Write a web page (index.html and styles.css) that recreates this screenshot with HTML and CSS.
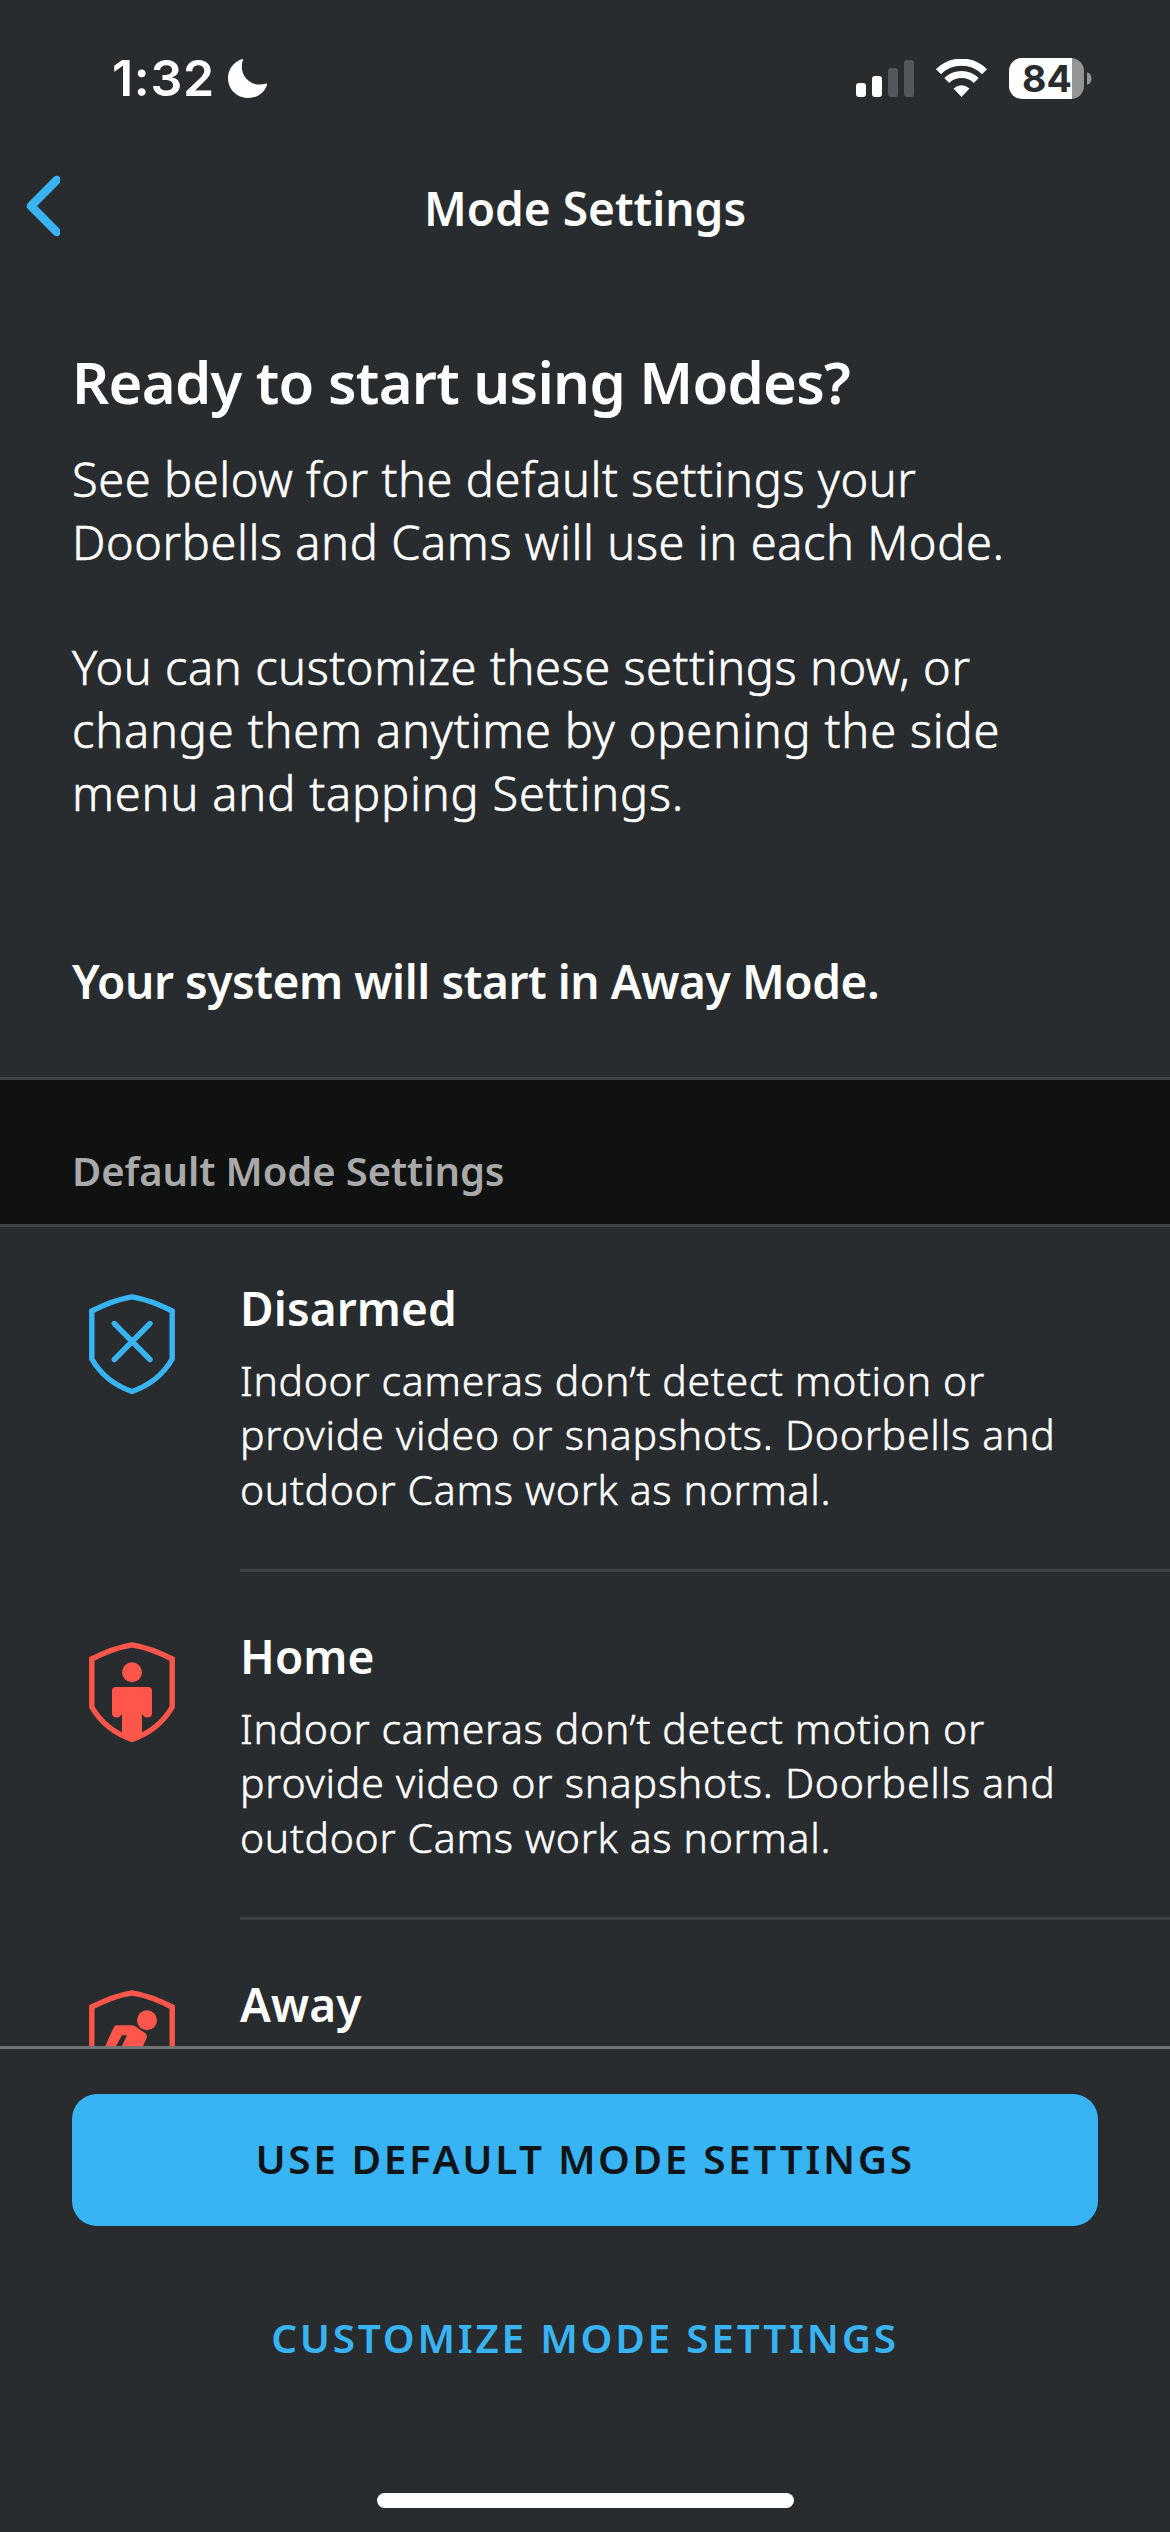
FILE: index.html
```html
<!DOCTYPE html>
<html lang="en">
<head>
<meta charset="utf-8">
<title>Mode Settings</title>
<link rel="stylesheet" href="styles.css">
</head>
<body>
<div class="screen">
  <div class="status">
    <span class="time">1:32</span>
    <svg class="moon" width="39" height="39" viewBox="0 0 39 39"><path d="M15.2 0.3C13.2 5.5 12.8 13.500 18.200 19.500C23.500 25.400 31 26.800 38.200 24.600Q39.300 24.500 39 25.800C36.700 33.700 29 39 20.500 39C9 39 0 30.500 0 19C0 10.500 5.500 3 13.500 0.200Q15.500 -0.400 15.200 0.300Z" fill="#fff"/></svg>
    <svg class="signal" width="58" height="37" viewBox="0 0 58 37"><rect y="23" width="10" height="14" rx="3" fill="#fff"/><rect x="16" y="16" width="10" height="21" rx="3" fill="#fff"/><rect x="32" y="8" width="10" height="29" rx="3" fill="#53565a"/><rect x="48" width="10" height="37" rx="3" fill="#53565a"/></svg>
    <svg class="wifi" width="51" height="38" viewBox="0 0 51 38"><g fill="none" stroke="#fff"><path d="M2.500 12.700A32.500 32.500 0 0 1 48.500 12.700" stroke-width="7.200"/><path d="M10.700 21.500A21 21 0 0 1 40.300 21.500" stroke-width="7"/></g><path d="M25.500 38L17.500 29.600Q25.500 22.800 33.500 29.600Z" fill="#fff"/></svg>
    <div class="battery"><span class="level">84</span><svg width="5" height="13" viewBox="0 0 5 13"><path d="M0 0Q4.500 2 4.500 6.500T0 13Z" fill="#939597"/></svg></div>
  </div>
  <div class="nav">
    <svg class="back" width="40" height="64" viewBox="0 0 40 64"><path d="M36.800 6L11 32L36.800 58" fill="none" stroke="#38b4f2" stroke-width="8.600" stroke-linecap="round" stroke-linejoin="round"/></svg>
    <span class="title">Mode Settings</span>
  </div>
  <div class="intro">
    <h1>Ready to start using Modes?</h1>
    <p>See below for the default settings your<br>Doorbells and Cams will use in each Mode.</p>
    <p>You can customize these settings now, or<br><span class="loose">change them anytime by opening the side<br>menu and tapping Settings.</span></p>
    <p class="note">Your system will start in Away Mode.</p>
  </div>
  <div class="section">Default Mode Settings</div>
  <ul class="modes">
    <li>
      <svg class="shield disarmed" width="86" height="101" viewBox="0 0 86 101"><path class="outline" d="M43 2.800Q62 6 83.200 17V65Q70 88 43 97.500Q16 88 2.800 65V17Q24 6 43 2.800Z"/><path class="outline" stroke-linecap="round" d="M25.300 29.500L61 65.500M61 29.500L25.300 65.500"/></svg>
      <div class="text"><h2>Disarmed</h2>
      <p>Indoor cameras don’t detect motion or<br><span class="loose">provide video or snapshots. Doorbells and</span><br>outdoor Cams work as normal.</p></div>
    </li>
    <li>
      <svg class="shield armed" width="86" height="101" viewBox="0 0 86 101"><path class="outline" d="M43 2.800Q62 6 83.200 17V65Q70 88 43 97.500Q16 88 2.800 65V17Q24 6 43 2.800Z"/><circle cx="43" cy="30.300" r="10"/><path d="M27 45H59Q63 45 63 49V71Q63 75.500 58.500 75.500Q54.500 75.500 53 71.500V94L43 99L33 94V71.500Q31.500 75.500 27.500 75.500Q23 75.500 23 71V49Q23 45 27 45Z"/></svg>
      <div class="text"><h2>Home</h2>
      <p>Indoor cameras don’t detect motion or<br><span class="loose">provide video or snapshots. Doorbells and</span><br>outdoor Cams work as normal.</p></div>
    </li>
    <li>
      <svg class="shield armed" width="86" height="101" viewBox="0 0 86 101"><path class="outline" d="M43 2.800Q62 6 83.200 17V65Q70 88 43 97.500Q16 88 2.800 65V17Q24 6 43 2.800Z"/><circle cx="58" cy="30.300" r="10"/><path fill-rule="evenodd" d="M27 35.300H42Q44.500 35.300 46.500 36.600L56 43Q58.800 45 57.600 48L50 66H15L16.500 56Q21 45 25 37Q25.900 35.300 27 35.300ZM33 45.300L25.500 59H31.500L38 45.300Z"/></svg>
      <div class="text"><h2>Away</h2></div>
    </li>
  </ul>
  <div class="footer">
    <div class="primary">USE DEFAULT MODE SETTINGS</div>
    <div class="secondary">CUSTOMIZE MODE SETTINGS</div>
    <div class="home-bar"></div>
  </div>
</div>
</body>
</html>
```
FILE: styles.css
```css
* { box-sizing: border-box; }
body { margin: 0; background: #282c2f; }
.screen { width: 1170px; height: 2532px; display: flex; flex-direction: column; overflow: hidden; background: #282c2f; color: #fff; font-family: "Noto Sans", sans-serif; }
h1, h2, p, ul { margin: 0; padding: 0; white-space: nowrap; }

.status { flex: none; height: 156px; padding: 0 78px 0 112px; display: flex; align-items: center; font-family: Inter, sans-serif; }
.time { font-size: 50px; font-weight: 600; line-height: 60px; width: 116px; letter-spacing: 0.7px; }
.moon { margin-right: auto; }
.signal { margin-right: 22px; }
.wifi { margin-right: 22px; }
.battery { display: flex; align-items: center; gap: 3px; }
.level { width: 75px; height: 41px; border-radius: 13px; background: linear-gradient(to right, #fff 63px, #939597 63px); color: #282c2f; font-size: 37.5px; font-weight: 700; line-height: 41px; padding-left: 13px; }

.nav { flex: none; height: 102px; padding-left: 20px; display: grid; grid-template-columns: 40px 1fr 60px; align-items: center; }
.back { margin-bottom: 2px; }
.title { justify-self: center; padding-top: 2px; font-size: 46px; font-weight: 600; line-height: 60px; }

.intro { flex: none; height: 819px; padding: 84px 72px 0; }
h1 { font-size: 58px; font-weight: 600; line-height: 80px; margin-bottom: 26px; letter-spacing: -0.75px; }
.intro p { font-size: 47px; font-weight: 300; line-height: 62.7px; margin-bottom: 62.7px; letter-spacing: 0.57px; -webkit-text-stroke: 0.6px currentColor; }
.intro .loose { letter-spacing: 0.82px; }
.intro .note { font-size: 46px; font-weight: 600; line-height: 60px; padding-top: 64px; margin: 0; letter-spacing: -0.42px; -webkit-text-stroke: 0; }

.section { flex: none; height: 150px; padding: 61px 72px 0; border-top: 3px solid #3f4244; border-bottom: 3px solid #3f4244; background: #101111; color: #a9a9a9; font-size: 40px; font-weight: 600; line-height: 60px; letter-spacing: -0.1px; }

.modes { flex: 1; min-height: 0; overflow: hidden; list-style: none; margin-top: -3px; }
.modes li { height: 348px; padding: 70px 0 0 89px; display: flex; gap: 65px; align-items: flex-start; }
.shield { flex: none; }
.outline { fill: none; stroke-width: 5.4; }
.disarmed .outline { stroke: #38b4f2; }
.armed { fill: #ff564b; }
.armed .outline { stroke: #ff564b; }
.text { flex: 1; height: 295px; margin-top: -17px; padding-top: 1px; border-bottom: 3px solid #3c4042; }
h2 { font-size: 46px; font-weight: 600; line-height: 60px; letter-spacing: 0.1px; }
.text p { margin-top: 14.6px; font-size: 41px; font-weight: 300; line-height: 54.6px; letter-spacing: 0.66px; -webkit-text-stroke: 0.5px currentColor; }
.text .loose { letter-spacing: 0.76px; }

.footer { flex: none; height: 486px; padding: 45px 72px 24px; border-top: 3px solid #727476; background: #282c2f; display: flex; flex-direction: column; align-items: center; }
.primary { width: 1026px; height: 132px; border-radius: 25px; background: #38b4f5; color: #101416; display: flex; justify-content: center; align-items: center; padding-bottom: 3px; font-size: 40.5px; font-weight: 600; letter-spacing: 2.6px; }
.secondary { margin-top: 82px; color: #38b4f2; font-size: 40.5px; font-weight: 600; line-height: 60px; letter-spacing: 2.75px; }
.home-bar { width: 417px; height: 15px; border-radius: 8px; background: #fff; margin-top: auto; }
```
